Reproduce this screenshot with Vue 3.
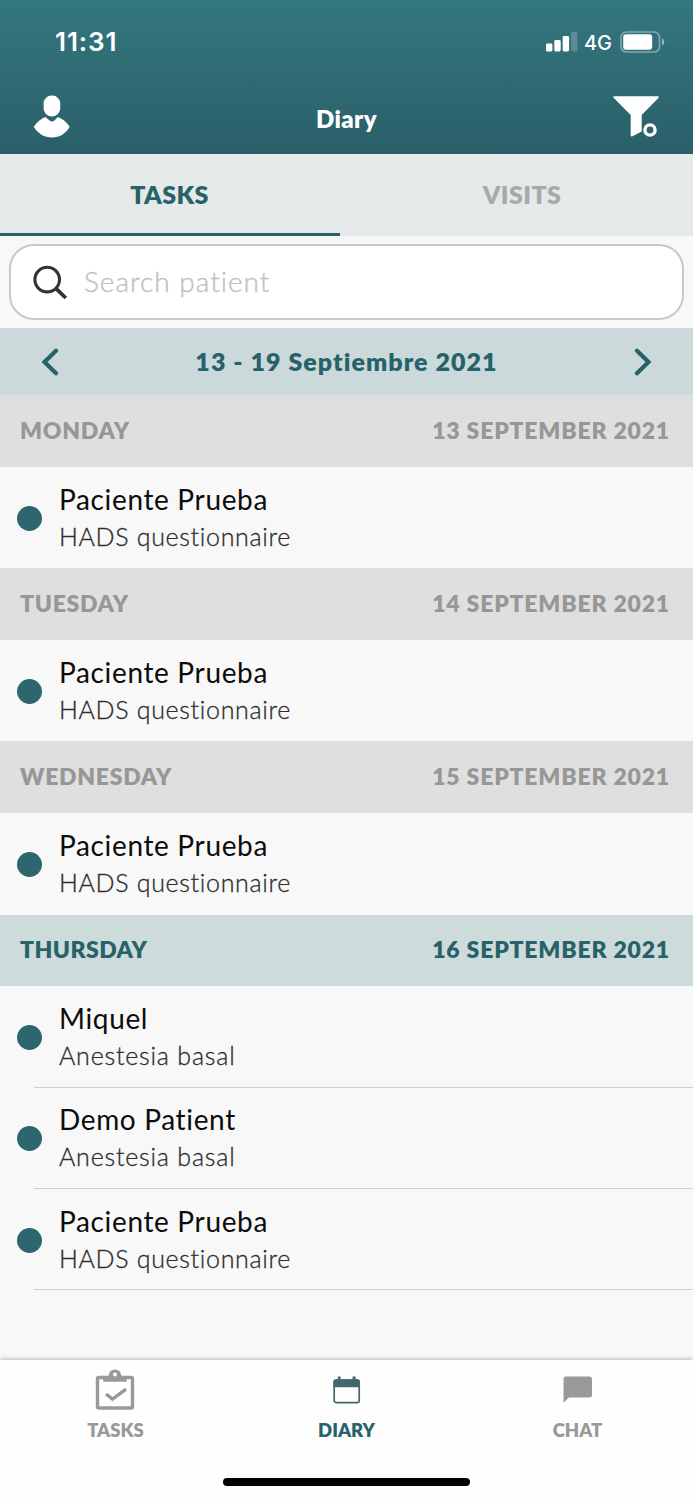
<script setup>
const days = [
  { key: 'mon', name: 'MONDAY', date: '13 SEPTEMBER 2021', tasks: [{ patient: 'Paciente Prueba', detail: 'HADS questionnaire', kind: 'hads' }] },
  { key: 'tue', name: 'TUESDAY', date: '14 SEPTEMBER 2021', tasks: [{ patient: 'Paciente Prueba', detail: 'HADS questionnaire', kind: 'hads' }] },
  { key: 'wed', name: 'WEDNESDAY', date: '15 SEPTEMBER 2021', tasks: [{ patient: 'Paciente Prueba', detail: 'HADS questionnaire', kind: 'hads' }] },
  {
    key: 'thu',
    name: 'THURSDAY',
    date: '16 SEPTEMBER 2021',
    today: true,
    tasks: [
      { patient: 'Miquel', detail: 'Anestesia basal', kind: 'anestesia' },
      { patient: 'Demo Patient', detail: 'Anestesia basal', kind: 'anestesia' },
      { patient: 'Paciente Prueba', detail: 'HADS questionnaire', kind: 'hads' },
    ],
  },
]
</script>

<template>
  <div class="app">
    <header class="top">
      <div class="status">
        <span class="time">11:31</span>
        <div class="status-right">
          <svg class="signal" width="32" height="20" viewBox="0 0 32 20">
            <rect x="0" y="11.500" width="6.400" height="8" rx="1.400" fill="#fff" />
            <rect x="8.300" y="8" width="6.400" height="11.500" rx="1.400" fill="#fff" />
            <rect x="16.700" y="4" width="6.400" height="15.500" rx="1.400" fill="#fff" />
            <rect x="25" y="0" width="6.400" height="19.500" rx="1.400" fill="#fff" opacity=".2" />
          </svg>
          <span class="net">4G</span>
          <svg class="battery" width="46" height="22" viewBox="0 0 46 22">
            <rect x="1" y="1" width="38.500" height="20" rx="5.600" fill="none" stroke="#fff" stroke-opacity=".4" stroke-width="1.600" />
            <rect x="3.200" y="3.300" width="29" height="15.400" rx="3" fill="#fff" />
            <path d="M42 7.600c3 1.200 3 5.600 0 6.800z" fill="#fff" opacity=".5" />
          </svg>
        </div>
      </div>
      <div class="bar">
        <svg class="user" width="48" height="44" viewBox="0 0 48 44">
          <rect x="10.600" y=".6" width="16.600" height="20.800" rx="7.800" fill="#fff" />
          <path d="M12.400 22 16.500 25.600Q19 27.600 21.500 25.600L24.800 22C30 24 34.200 27.500 36.700 31.800C33 38.500 26.500 42.600 19 42.600S4.500 38.500.8 31.800C3.500 27.500 7.500 24 12.400 22Z" fill="#fff" />
        </svg>
        <span class="title">Diary</span>
        <svg class="filter" width="48" height="44" viewBox="0 0 48 44">
          <path d="M1.800 1.300H46.200Q47.400 1.500 46.600 2.700L29.700 20V36.500L20 41.500Q18.800 41.700 18.700 40.700V20L1.600 2.700Q.8 1.700 1.800 1.300Z" fill="#fff" />
          <circle cx="38" cy="35" r="5.100" fill="none" stroke="#fff" stroke-width="3.400" />
        </svg>
      </div>
    </header>

    <div class="tabs">
      <div class="tab active">TASKS</div>
      <div class="tab">VISITS</div>
    </div>

    <div class="search-wrap">
      <div class="search">
        <svg width="35" height="35" viewBox="0 0 35 35" fill="none" stroke="#333">
          <circle cx="14.200" cy="14.600" r="12.300" stroke-width="3.100" />
          <path d="M22.600 23.200 32.800 33" stroke-width="3.800" />
        </svg>
        <span class="placeholder">Search patient</span>
      </div>
    </div>

    <div class="week">
      <svg width="18" height="28" viewBox="0 0 18 28"><path d="M15 2.700 3.500 14 15 25.300" /></svg>
      <span>13 - 19 Septiembre 2021</span>
      <svg width="18" height="28" viewBox="0 0 18 28"><path d="M3 2.700 14.500 14 3 25.300" /></svg>
    </div>

    <main class="list">
      <section v-for="day in days" :key="day.key">
        <div class="day" :class="[day.key, { today: day.today }]">
          <span class="name">{{ day.name }}</span>
          <span class="date">{{ day.date }}</span>
        </div>
        <div v-for="(task, i) in day.tasks" :key="i" class="task" :class="{ lined: day.today }">
          <i class="dot"></i>
          <div class="info">
            <div class="patient">{{ task.patient }}</div>
            <div class="detail" :class="task.kind">{{ task.detail }}</div>
          </div>
        </div>
      </section>
    </main>

    <nav class="nav">
      <div class="item">
        <div class="icon">
          <svg class="clipboard" width="40" height="42" viewBox="0 0 40 42">
            <path d="M4 8.500H36Q37.500 8.500 37.500 10V37.500Q37.500 39 36 39H4Q2.500 39 2.500 37.500V10Q2.500 8.500 4 8.500Z" fill="none" stroke="#999" stroke-width="3.400" />
            <path d="M8.200 12.800V9Q8.200 7 11 7H13.500Q14.500.6 20 .6T26.500 7H29Q31.800 7 31.800 9V12.800Z" fill="#999" />
            <circle cx="20" cy="5.500" r="2" fill="#fff" />
            <path d="M11 25 17.500 30.200 31 20.200" fill="none" stroke="#999" stroke-width="3.400" />
          </svg>
        </div>
        <span>TASKS</span>
      </div>
      <div class="item on">
        <div class="icon">
          <svg width="28" height="28" viewBox="0 0 28 28">
            <rect x="1.200" y="4" width="25" height="22.600" rx="2.200" fill="none" stroke="#42676f" stroke-width="1.700" />
            <path d="M.4 11.300V6Q.4 3.200 3.200 3.200H4.800V.4H7.600V3.200H19.600V.4H22.600V3.200H24.200Q27 3.200 27 6V11.300Z" fill="#42676f" />
          </svg>
        </div>
        <span>DIARY</span>
      </div>
      <div class="item">
        <div class="icon">
          <svg width="30" height="28" viewBox="0 0 30 28">
            <path d="M3 .5H26.500Q29 .5 29 3V19Q29 21.500 26.500 21.500H6L.5 26.800V3Q.5.5 3 .5Z" fill="#999" />
          </svg>
        </div>
        <span>CHAT</span>
      </div>
      <div class="home"></div>
    </nav>
  </div>
</template>

<style>
body { margin: 0; }
</style>

<style scoped>
.app { width: 693px; height: 1500px; display: flex; flex-direction: column; background: #f8f8f8; font-family: Lato, "Liberation Sans", sans-serif; font-variant-ligatures: none; white-space: nowrap; overflow: hidden; }
.top { height: 154px; flex: none; color: #fff; background: linear-gradient(#34777f, #2a5f68); }
.status { height: 84px; padding: 0 27px 0 55px; display: flex; align-items: center; justify-content: space-between; box-sizing: border-box; }
.time { font: 600 26px/30px Inter, sans-serif; letter-spacing: .9px; }
.status-right { display: flex; align-items: center; }
.net { font: 500 20px/24px Inter, sans-serif; margin: 2px 8px 0 6px; }
.bar { height: 70px; padding: 0 33px; display: flex; align-items: center; justify-content: space-between; }
.bar svg { margin-bottom: 5px; }
.title { font-size: 24px; font-weight: 800; letter-spacing: .4px; margin-bottom: 2px; }
.tabs { height: 82px; flex: none; display: flex; background: #e4eae9; }
.tab { width: 353px; display: flex; align-items: center; justify-content: center; box-sizing: border-box; font-size: 25px; font-weight: 800; letter-spacing: .4px; color: #a9a9a9; padding: 0 0 2px 11px; }
.tab.active { width: 340px; color: #27626b; border-bottom: 3px solid #27626b; padding: 1px 1px 0 0; }
.search-wrap { height: 92.400px; flex: none; padding: 8px 9px; box-sizing: border-box; }
.search { height: 75.500px; border: 2px solid #c9c9cd; border-radius: 25px; background: #fff; box-sizing: border-box; display: flex; align-items: center; padding-left: 22px; }
.search svg { margin-top: 2px; }
.placeholder { margin: 0 0 1px 16px; font-size: 28px; font-weight: 300; letter-spacing: 1px; color: #c2c2c4; -webkit-text-stroke: .4px #c2c2c4; }
.week { height: 66.600px; flex: none; background: #cbd9da; display: flex; align-items: center; justify-content: space-between; padding: 0 41px; font-size: 25px; font-weight: 800; letter-spacing: 1.050px; color: #27626b; }
.week span { margin-bottom: 2px; }
.week svg { fill: none; stroke: #27626b; stroke-width: 4.200; stroke-linecap: round; }
.list { flex: 1; min-height: 0; }
.day { height: 71.900px; display: flex; align-items: center; justify-content: space-between; padding: 0 23px 2px 20px; box-sizing: border-box; background: #dfdfdf; color: #979797; font-size: 23px; font-weight: 800; }
.day.today { background: #cddbdb; color: #27626b; }
.name { letter-spacing: .7px; }
.today .name { letter-spacing: .45px; }
.date { letter-spacing: .8px; }
.task { height: 101.300px; display: flex; align-items: center; position: relative; }
.dot { width: 25px; height: 25px; border-radius: 50%; background: #2d666f; margin: 1px 17px 0; }
.patient { font-size: 28px; line-height: 37px; letter-spacing: .65px; color: #0c0c0c; }
.detail { font-size: 25px; line-height: 37px; font-weight: 300; color: #2c2c2c; -webkit-text-stroke: .3px #2c2c2c; }
.hads { letter-spacing: .67px; }
.anestesia { letter-spacing: .8px; }
.task.lined::after { content: ""; position: absolute; left: 34px; right: 0; bottom: 0; height: 1px; background: #cfcfcf; }
.nav { height: 140px; flex: none; background: #fefefe; box-shadow: 0 -1px 4px rgba(0, 0, 0, .25); display: flex; position: relative; z-index: 1; }
.item { flex: 1; display: flex; flex-direction: column; align-items: center; font-size: 18.500px; font-weight: 800; color: #999; }
.item.on { color: #27626b; }
.icon { height: 59px; display: flex; align-items: center; }
.clipboard { margin-right: 1px; }
.home { position: absolute; left: 223px; top: 118px; width: 247px; height: 8px; border-radius: 4px; background: #000; }
</style>
